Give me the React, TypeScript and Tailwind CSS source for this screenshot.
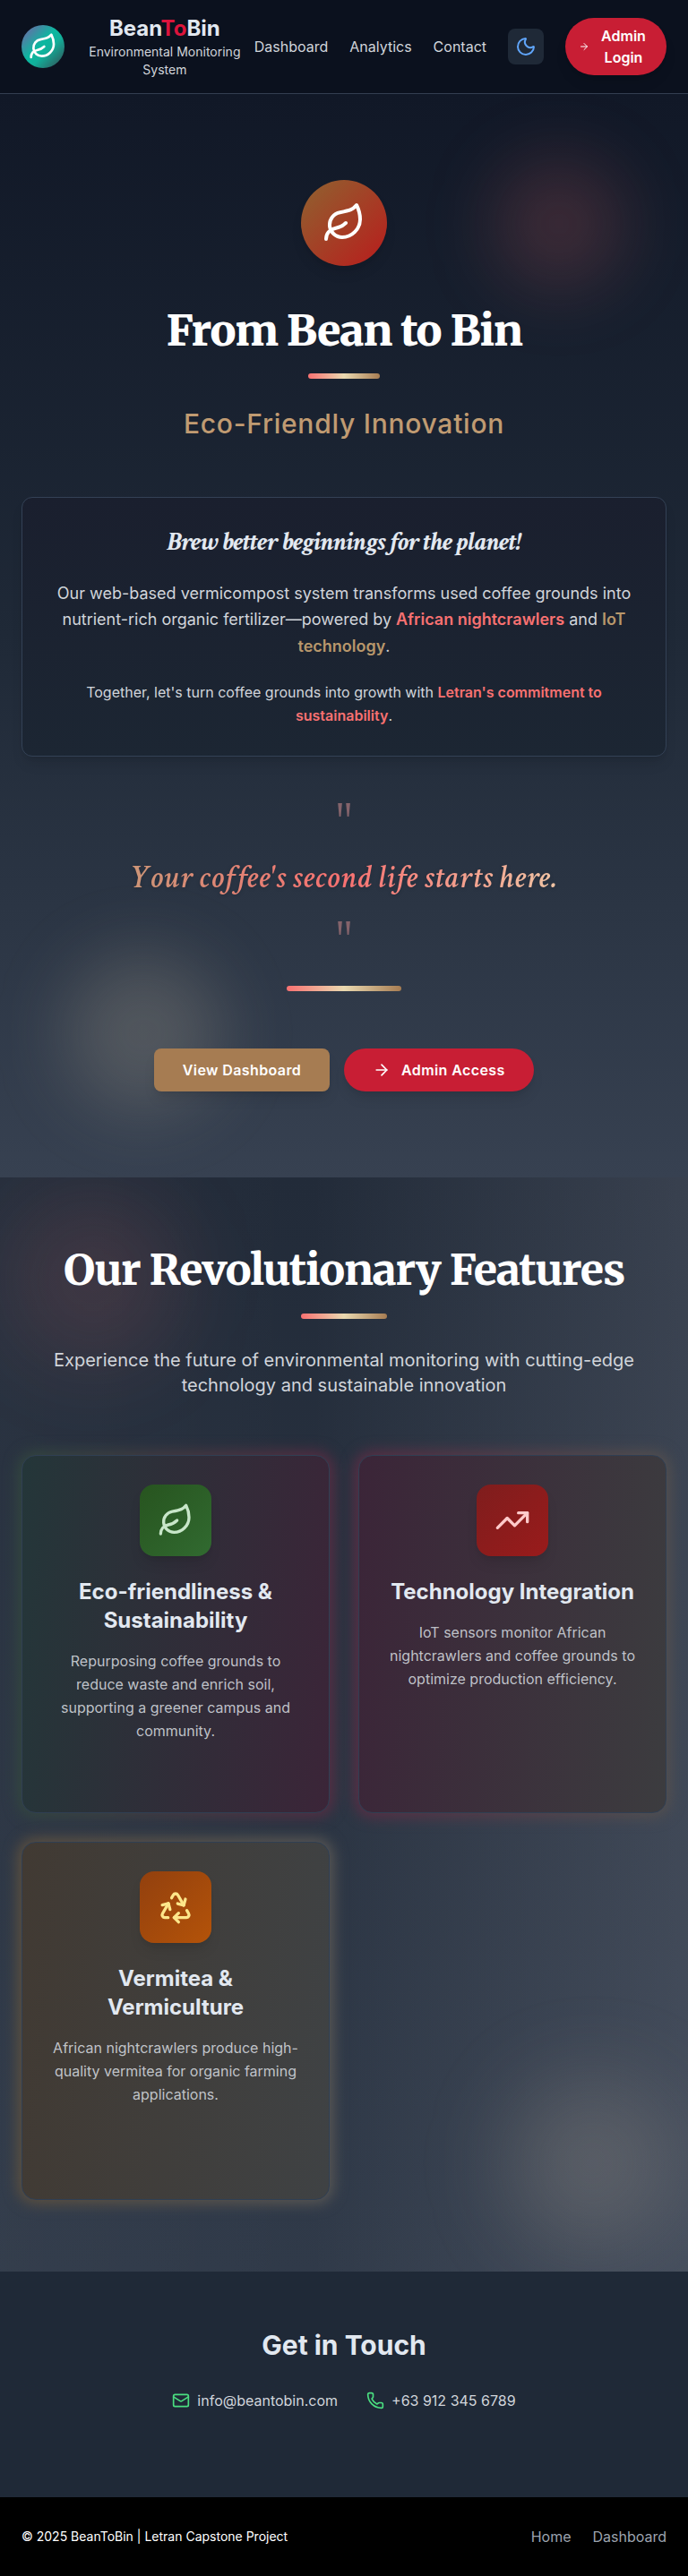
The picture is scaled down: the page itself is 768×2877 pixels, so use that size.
import { Leaf, Moon, ArrowRight, TrendingUp, Recycle, Mail, Phone } from "lucide-react";
import type { ReactNode } from "react";

const barGradient = "bg-[linear-gradient(90deg,#f87171,#ead9b0,#a67c52)]";

function Header() {
  return (
    <header className="flex h-[105px] items-center border-b border-[#333e50] bg-[#0b111e] px-6">
      <div className="flex h-12 w-12 shrink-0 items-center justify-center rounded-full bg-[linear-gradient(135deg,#7b5ba8_0%,#0bb8a0_45%,#11b09a_60%,#37474f_100%)]">
        <Leaf className="h-8 w-8 text-white" strokeWidth={2} />
      </div>
      <div className="ml-3 w-[200px] text-center">
        <div className="text-2xl leading-8 font-bold text-[#e2e8f0]">
          Bean<span className="text-[#dc143c]">To</span>Bin
        </div>
        <div className="text-sm leading-5 text-[#d1d5db]">Environmental Monitoring System</div>
      </div>
      <nav className="flex items-center gap-6 text-base text-[#d1d5db]">
        <span>Dashboard</span>
        <span>Analytics</span>
        <span>Contact</span>
        <button className="flex h-10 w-10 items-center justify-center rounded-lg bg-[#1f2937]">
          <Moon className="h-6 w-6 text-[#60a5fa]" />
        </button>
        <button className="flex h-16 w-[113px] items-center rounded-full bg-[#c81e34] pl-[15px] font-semibold text-white shadow-lg">
          <ArrowRight className="h-3 w-3" />
          <span className="ml-3 w-[52px] text-center">Admin Login</span>
        </button>
      </nav>
    </header>
  );
}

function QuoteMark() {
  return (
    <div className="h-[60px] scale-x-75 font-['Liberation_Serif',serif] text-[64px] leading-[66px] text-[#84636b]">"</div>
  );
}

function Hero() {
  return (
    <section className="relative h-[1210px] overflow-hidden bg-[linear-gradient(180deg,#111827,#1f2937_50%,#374151)] px-6">
      <div className="absolute top-[73px] left-[552px] h-36 w-36 rounded-full bg-[#f87171]/18 blur-[40px]" />
      <div className="absolute top-[960px] left-[72px] h-[176px] w-[176px] rounded-full bg-[#e4d6b4]/19 blur-[40px]" />
      <div className="relative flex flex-col items-center pt-24 text-center">
        <div className="flex h-24 w-24 items-center justify-center rounded-full bg-[linear-gradient(135deg,#8f6330,#b91c1c)] shadow-lg">
          <Leaf className="h-12 w-12 text-white" />
        </div>
        <h1 className="mt-[42px] font-[Merriweather,'Liberation_Serif',serif] text-5xl leading-[60px] font-black tracking-[-0.025em] whitespace-nowrap text-white">
          From Bean to Bin
        </h1>
        <div className={`mt-[18px] h-1.5 w-20 rounded-full ${barGradient}`} />
        <h2 className="mt-8 text-3xl leading-9 font-medium tracking-[0.025em] text-[#c09b72]">Eco-Friendly Innovation</h2>
        <div className="mt-16 h-[290px] w-full rounded-xl border border-[#334155] bg-[linear-gradient(180deg,#1a1f2e,#1c2633)] px-8 pt-8 shadow-lg">
          <h3 className="font-['Crimson_Text','Liberation_Serif',serif] text-[30px] leading-[36px] font-bold tracking-[-0.025em] text-[#e2e8f0] italic">
            Brew better beginnings for the planet!
          </h3>
          <p className="mt-6 text-lg leading-[29.25px] text-[#d1d5db]">
            Our web-based vermicompost system transforms used coffee grounds into nutrient-rich organic fertilizer—powered by{" "}
            <span className="font-semibold text-[#f87171]">African nightcrawlers</span> and{" "}
            <span className="font-semibold text-[#b8976b]">IoT technology</span>.
          </p>
          <p className="mt-6 text-base leading-[26px] text-[#d1d5db]">
            Together, let's turn coffee grounds into growth with{" "}
            <span className="font-semibold text-[#f87171]">Letran's commitment to sustainability</span>.
          </p>
        </div>
        <div className="mt-10">
          <QuoteMark />
        </div>
        <p className="bg-[linear-gradient(90deg,#cc9577,#f87171_50%,#f0c4a4)] bg-clip-text font-['Crimson_Text','Liberation_Serif',serif] text-4xl leading-[72px] font-semibold tracking-[0.025em] whitespace-nowrap text-transparent italic drop-shadow-sm">
          Your coffee's second life starts here.
        </p>
        <QuoteMark />
        <div className={`mt-6 h-1.5 w-32 rounded-full ${barGradient}`} />
        <div className="mt-16 flex gap-4 font-semibold tracking-[0.025em] text-white">
          <button className="h-12 w-[196px] rounded-lg bg-[#a67c52] shadow-lg">View Dashboard</button>
          <button className="flex h-12 w-[212px] items-center gap-3 rounded-full bg-[#c81e34] pl-8 shadow-lg">
            <ArrowRight className="h-5 w-5" />
            Admin Access
          </button>
        </div>
      </div>
    </section>
  );
}

type CardProps = { surface: string; glow: string; tile: string; icon: ReactNode; title: string; text: string };

function Card({ surface, glow, tile, icon, title, text }: CardProps) {
  return (
    <div className="relative">
      <div className={`absolute -inset-1 rounded-[20px] blur-[8px] ${glow}`} />
      <div className={`relative flex h-[400px] flex-col items-center rounded-2xl border border-[#303f53] px-8 pt-8 text-center ${surface}`}>
        <div className={`flex h-20 w-20 shrink-0 items-center justify-center rounded-2xl shadow-lg ${tile}`}>{icon}</div>
        <h3 className="mt-6 text-2xl leading-8 font-bold text-[#e2e8f0]">{title}</h3>
        <p className="mt-4 text-base leading-[26px] text-[#d1d5db]/90">{text}</p>
      </div>
    </div>
  );
}

function Features() {
  return (
    <section className="relative h-[1222px] overflow-hidden bg-[linear-gradient(90deg,rgba(255,255,255,0.02),transparent_45%,rgba(240,240,255,0.11)),linear-gradient(180deg,#222b39,#303a49)] px-6">
      <div className="absolute top-[18px] left-[8px] h-48 w-48 rounded-full bg-[#f87171]/12 blur-[48px]" />
      <div className="absolute top-[1006px] left-[566px] h-[190px] w-[190px] rounded-full bg-[#d8c8b0]/18 blur-[48px]" />
      <div className="relative flex flex-col items-center pt-[73px] text-center">
        <h2 className="font-[Merriweather,'Liberation_Serif',serif] text-5xl leading-[60px] font-extrabold tracking-[-0.025em] whitespace-nowrap text-white">
          Our Revolutionary Features
        </h2>
        <div className={`mt-[19px] h-1.5 w-24 rounded-full ${barGradient}`} />
        <p className="mt-8 w-[672px] text-xl leading-7 text-[#d1d5db]">
          Experience the future of environmental monitoring with cutting-edge technology and sustainable innovation
        </p>
      </div>
      <div className="mt-16 grid grid-cols-2 gap-8">
        <Card
          surface="bg-[linear-gradient(95deg,#243639,#3b2538)]"
          glow="bg-[linear-gradient(90deg,#32483f,#5a2c43)]"
          tile="bg-[linear-gradient(135deg,#27541f,#316a30)]"
          icon={<Leaf className="h-10 w-10 text-[#c8e6c9]" />}
          title="Eco-friendliness & Sustainability"
          text="Repurposing coffee grounds to reduce waste and enrich soil, supporting a greener campus and community."
        />
        <Card
          surface="bg-[linear-gradient(95deg,#3b2538,#3c3c3f)]"
          glow="bg-[linear-gradient(90deg,#5c2c44,#55514f)]"
          tile="bg-[linear-gradient(135deg,#7f1d1d,#991b1b)]"
          icon={<TrendingUp className="h-10 w-10 text-[#fecaca]" />}
          title="Technology Integration"
          text="IoT sensors monitor African nightcrawlers and coffee grounds to optimize production efficiency."
        />
        <Card
          surface="bg-[linear-gradient(95deg,#413a33,#3f4244)]"
          glow="bg-[linear-gradient(90deg,#5f513e,#5b5956)]"
          tile="bg-[linear-gradient(135deg,#92400e,#b45309)]"
          icon={<Recycle className="h-10 w-10 text-[#fde68a]" />}
          title="Vermitea & Vermiculture"
          text="African nightcrawlers produce high-quality vermitea for organic farming applications."
        />
      </div>
    </section>
  );
}

export default function App() {
  return (
    <div className="w-full bg-black font-[Inter,sans-serif]">
      <Header />
      <Hero />
      <Features />
      <section className="h-[252px] bg-[#1f2937] pt-16 text-center">
        <h2 className="text-3xl leading-9 font-bold text-[#e2e8f0]">Get in Touch</h2>
        <div className="mt-8 flex justify-center gap-8 text-base text-[#d1d5db]">
          <span className="flex items-center gap-2">
            <Mail className="h-5 w-5 text-[#4ade80]" />
            info@beantobin.com
          </span>
          <span className="flex items-center gap-2">
            <Phone className="h-5 w-5 text-[#4ade80]" />
            +63 912 345 6789
          </span>
        </div>
      </section>
      <footer className="flex h-[88px] items-center justify-between bg-black px-6">
        <span className="text-sm text-white">© 2025 BeanToBin | Letran Capstone Project</span>
        <div className="flex gap-6 text-base text-[#9ca3af]">
          <span>Home</span>
          <span>Dashboard</span>
        </div>
      </footer>
    </div>
  );
}
